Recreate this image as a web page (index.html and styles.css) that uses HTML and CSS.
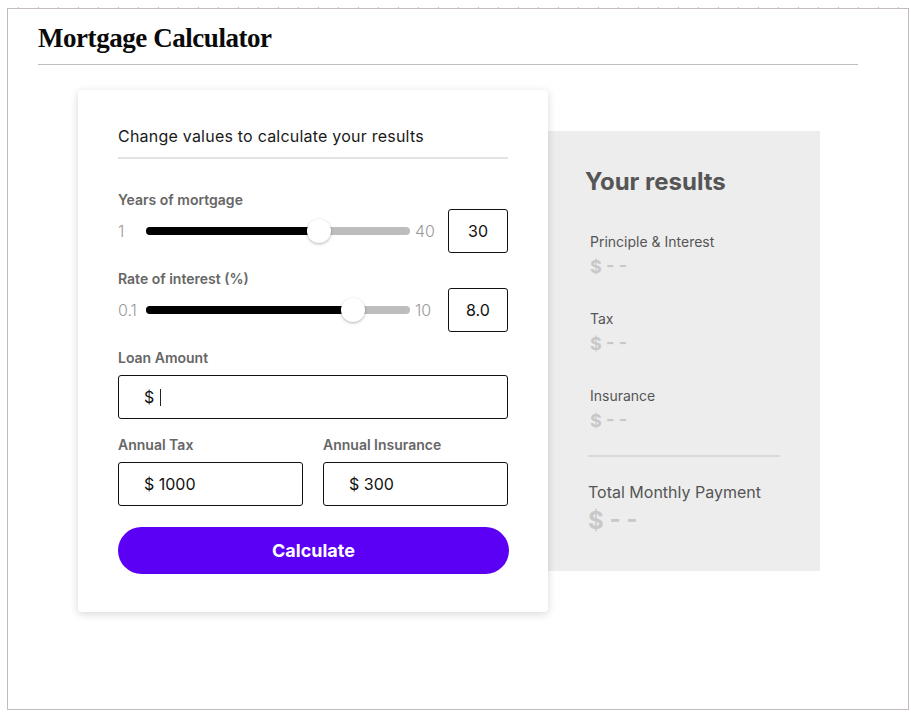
FILE: index.html
```html
<!DOCTYPE html>
<html lang="en">
<head>
<meta charset="utf-8">
<title>Mortgage Calculator</title>
<link rel="stylesheet" href="styles.css">
</head>
<body>
<div class="ruler"></div>
<div class="frame">
  <header class="header">
    <h1 class="title">Mortgage Calculator</h1>
  </header>
  <main class="main">
    <section class="card">
      <p class="subtitle">Change values to calculate your results</p>

      <div class="group group-first">
        <div class="label">Years of mortgage</div>
        <div class="slider-row">
          <span class="range-min">1</span>
          <div class="track"><div class="fill" style="width:173px"></div><div class="thumb"></div></div>
          <span class="range-max">40</span>
          <div class="box">30</div>
        </div>
      </div>

      <div class="group">
        <div class="label">Rate of interest (%)</div>
        <div class="slider-row">
          <span class="range-min">0.1</span>
          <div class="track"><div class="fill" style="width:207px"></div><div class="thumb"></div></div>
          <span class="range-max">10</span>
          <div class="box">8.0</div>
        </div>
      </div>

      <div class="group">
        <div class="label label-input">Loan Amount</div>
        <div class="field">$ <span class="caret"></span></div>
      </div>

      <div class="group pair">
        <div class="pair-col">
          <div class="label label-input">Annual Tax</div>
          <div class="field">$ 1000</div>
        </div>
        <div class="pair-col">
          <div class="label label-input">Annual Insurance</div>
          <div class="field">$ 300</div>
        </div>
      </div>

      <button class="calc" type="button">Calculate</button>
    </section>

    <aside class="results">
      <h2 class="results-title">Your results</h2>
      <div class="item item-first">
        <div class="item-label">Principle &amp; Interest</div>
        <div class="item-value">$ - -</div>
      </div>
      <div class="item">
        <div class="item-label">Tax</div>
        <div class="item-value">$ - -</div>
      </div>
      <div class="item">
        <div class="item-label">Insurance</div>
        <div class="item-value">$ - -</div>
      </div>
      <div class="total">
        <div class="total-label">Total Monthly Payment</div>
        <div class="total-value">$ - -</div>
      </div>
    </aside>
  </main>
</div>
</body>
</html>
```

FILE: styles.css
```css
* { box-sizing: border-box; }

html, body {
  margin: 0;
  padding: 0;
  background: #ffffff;
}

body {
  padding-top: 7px;
  font-family: Inter, "Noto Sans", "Liberation Sans", sans-serif;
  color: #111;
}

.ruler {
  margin-left: 7px;
  width: 902px;
  height: 1px;
  background: repeating-linear-gradient(to right, transparent 0 11px, #c9bfc1 11px 12px, transparent 12px 20px);
}

.frame {
  margin-left: 7px;
  width: 902px;
  height: 702px;
  border: 1px solid #c2babc;
}

.header {
  width: 820px;
  margin-left: 30px;
  padding-top: 13px;
  border-bottom: 1px solid #bdbdbd;
}

.title {
  margin: 0;
  padding-bottom: 10px;
  font-family: "Liberation Serif", "DejaVu Serif", serif;
  font-weight: 700;
  font-size: 27px;
  line-height: 32px;
  letter-spacing: -0.45px;
  color: #0a0a0a;
}

.main {
  display: flex;
  align-items: center;
  padding-left: 70px;
  margin-top: 25px;
}

.card {
  position: relative;
  z-index: 1;
  width: 470px;
  padding: 36px 40px 38px;
  background: #fff;
  border-radius: 4px;
  box-shadow: 0 2px 8px rgba(0, 0, 0, 0.16);
}

.subtitle {
  margin: 0;
  font-size: 16px;
  line-height: 20px;
  letter-spacing: 0.22px;
  color: #1a1a1a;
  padding-bottom: 11px;
  border-bottom: 2px solid #e2e2e2;
}

.group { margin-top: 18px; }
.group-first { margin-top: 33px; }

.label {
  font-size: 14px;
  line-height: 16px;
  font-weight: 600;
  color: #666;
  margin-bottom: 1px;
}

.label-input { margin-bottom: 9px; }

.slider-row {
  display: grid;
  grid-template-columns: 28px 264px 38px 60px;
  align-items: center;
  height: 44px;
}

.range-min, .range-max {
  font-size: 16px;
  font-weight: 300;
  color: #999;
}

.range-max { padding-left: 5px; }

.track {
  display: flex;
  align-items: center;
  height: 8px;
  border-radius: 4px;
  background: #bdbdbd;
}

.fill {
  height: 8px;
  border-radius: 4px 0 0 4px;
  background: #000;
  flex: none;
}

.thumb {
  flex: none;
  width: 24px;
  height: 24px;
  margin-left: -12px;
  border-radius: 50%;
  background: #fff;
  box-shadow: 0 1px 3px rgba(0, 0, 0, 0.3);
}

.box {
  height: 44px;
  border: 1px solid #111;
  border-radius: 3px;
  display: flex;
  align-items: center;
  justify-content: center;
  font-size: 16px;
  color: #111;
}

.field {
  height: 44px;
  border: 1px solid #111;
  border-radius: 3px;
  display: flex;
  align-items: center;
  padding-left: 25px;
  font-size: 16px;
  color: #111;
  white-space: pre;
}

.caret {
  display: inline-block;
  width: 1px;
  height: 17px;
  background: #222;
  margin-left: 1px;
}

.pair {
  display: grid;
  grid-template-columns: 185px 185px;
  column-gap: 20px;
}

.calc {
  display: block;
  width: 391px;
  height: 47px;
  margin-top: 21px;
  border: 0;
  border-radius: 24px;
  background: #5b00f5;
  color: #fff;
  font-family: Inter, "Noto Sans", "Liberation Sans", sans-serif;
  font-size: 18px;
  font-weight: 700;
  cursor: pointer;
}

.results {
  width: 272px;
  height: 440px;
  padding: 37px 40px 38px 40px;
  background: #ededed;
}

.results-title {
  margin: 0 0 0 -3px;
  font-size: 24px;
  line-height: 28px;
  font-weight: 700;
  color: #555;
}

.item { margin-top: 32px; padding-left: 2px; }
.item-first { margin-top: 37px; }

.item-label {
  font-size: 14px;
  line-height: 18px;
  font-weight: 400;
  color: #555;
}

.item-value {
  margin-top: 5px;
  font-size: 18px;
  line-height: 22px;
  font-weight: 700;
  color: #c8c8c8;
}

.total {
  margin-top: 23px;
  padding-top: 25px;
  border-top: 2px solid #d9d9d9;
  width: 192px;
}

.total-label {
  font-size: 16px;
  line-height: 20px;
  color: #555;
  white-space: nowrap;
}

.total-value {
  margin-top: 5px;
  font-size: 24px;
  line-height: 28px;
  font-weight: 700;
  color: #c8c8c8;
}
```
